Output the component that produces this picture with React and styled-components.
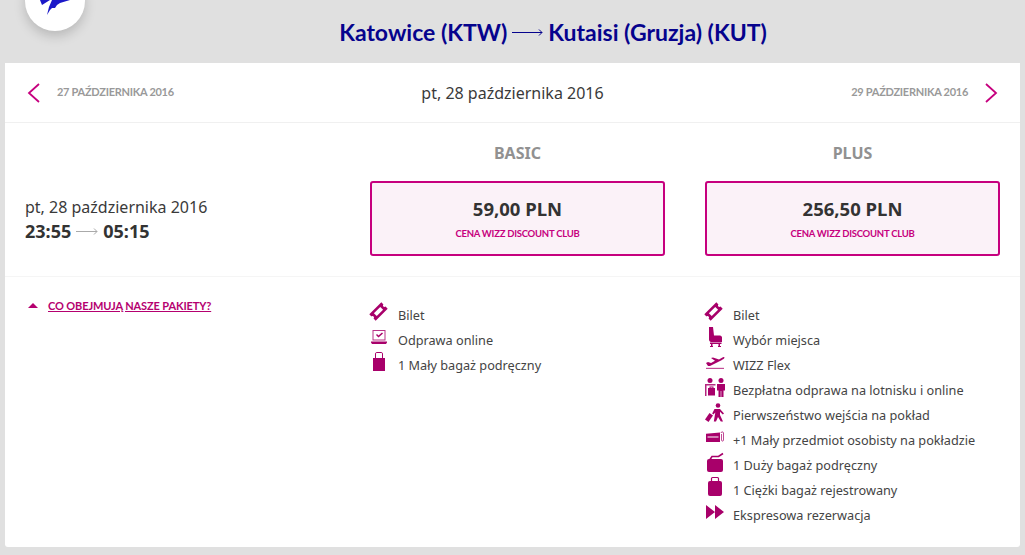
import React from 'react';
import styled, { createGlobalStyle } from 'styled-components';

const Global = createGlobalStyle`
  html, body { margin: 0; padding: 0; height: 555px; overflow: hidden; background: #e0e0e0; }
  body { font-family: "Noto Sans", "Liberation Sans", sans-serif; color: #333; }
`;

const Page = styled.div`
  height: 555px;
  padding: 0 5px;
  box-sizing: border-box;
  position: relative;
  overflow: hidden;
`;

const Header = styled.header`
  height: 63px;
  background: #e0e0e0;
  position: relative;
  display: flex;
  justify-content: center;
  padding: 17px 0 0 81px;
  box-sizing: border-box;
`;

const LogoBadge = styled.div`
  position: absolute;
  left: 20px;
  top: -29px;
  width: 60px;
  height: 60px;
  border-radius: 50%;
  background: #fff;
  box-shadow: 0 5px 12px rgba(0, 0, 0, 0.18);
  display: flex;
  align-items: flex-end;
  justify-content: center;
  svg { margin-bottom: 15px; }
`;

const Route = styled.h1`
  margin: 0;
  display: flex;
  align-items: center;
  gap: 5px;
  height: 30px;
  font: 700 23px/30px Lato, sans-serif;
  color: #06038d;
  white-space: nowrap;
`;

const Panel = styled.main`
  background: #fff;
  height: 484px;
  border-radius: 0 0 3px 3px;
`;

const DateNav = styled.nav`
  height: 59px;
  border-bottom: 1px solid #f0f0f0;
  display: grid;
  grid-template-columns: 1fr auto 1fr;
  align-items: center;
  padding: 0 22px;
`;

const NavSide = styled.div`
  display: flex;
  align-items: center;
  justify-content: ${(p) => (p.$end ? 'flex-end' : 'flex-start')};
  gap: 15px;
  font: 700 11px/16px Lato, sans-serif;
  letter-spacing: -0.27px;
  color: #999;
  span { position: relative; top: -1px; }
`;

const CurrentDate = styled.div`
  font-size: 16px;
  color: #3a3a3a;
`;

const Flight = styled.section`
  height: 153px;
  border-bottom: 1px solid #f5f5f5;
  display: grid;
  grid-template-columns: 325px 295px 295px;
  column-gap: 40px;
`;

const FlightInfo = styled.div`
  padding: 72px 0 0 20px;
  font-size: 16px;
  line-height: 24px;
  color: #3a3a3a;
`;

const Times = styled.div`
  display: flex;
  align-items: center;
  gap: 5px;
  font-size: 18px;
  font-weight: 700;
  color: #333;
`;

const Fare = styled.div`
  display: flex;
  flex-direction: column;
`;

const FareName = styled.div`
  height: 58px;
  padding-top: 18px;
  box-sizing: border-box;
  text-align: center;
  font-size: 16px;
  line-height: 24px;
  font-weight: 700;
  color: #919191;
`;

const PriceBox = styled.div`
  height: 75px;
  box-sizing: border-box;
  border: 2px solid #c6007e;
  border-radius: 3px;
  background: #fbf2f8;
  display: flex;
  flex-direction: column;
  align-items: center;
  padding-top: 14px;
`;

const Price = styled.div`
  font-size: 18.5px;
  line-height: 24px;
  font-weight: 700;
  color: #333;
`;

const Discount = styled.div`
  margin-top: 6px;
  font: 700 9.5px/14px Lato, sans-serif;
  letter-spacing: -0.25px;
  color: #c6007e;
`;

const Details = styled.section`
  display: grid;
  grid-template-columns: 325px 295px 295px;
  column-gap: 40px;
  padding-top: 20px;
`;

const Toggle = styled.a`
  display: flex;
  align-items: flex-start;
  gap: 10px;
  padding: 0 0 0 23px;
  font: 700 11px/17px Lato, sans-serif;
  letter-spacing: -0.12px;
  color: #b5006f;
  text-decoration: underline;
  &::before {
    content: '';
    margin-top: 6px;
    border-left: 5px solid transparent;
    border-right: 5px solid transparent;
    border-bottom: 5px solid #b5006f;
  }
`;

const Features = styled.ul`
  list-style: none;
  margin: 0;
  padding: 6px 0 0;
`;

const Feature = styled.li`
  height: 25px;
  box-sizing: border-box;
  padding-bottom: 2px;
  display: flex;
  align-items: center;
  gap: 8px;
  font-size: 12.7px;
  color: #444;
  white-space: nowrap;
`;

const IconSlot = styled.svg`
  width: 20px;
  height: 20px;
  flex: none;
  align-self: flex-start;
  overflow: visible;
  fill: #a8006a;
`;

const Arrow = ({ color, width }) => (
  <svg width={width} height="10" viewBox={`0 0 ${width} 10`} fill="none" stroke={color}>
    <path d={`M0 5.5H${width - 1}M${width - 4} 2.500l3 3-3 3`} strokeWidth="1" />
  </svg>
);

const Chevron = ({ right }) => (
  <svg width="15" height="22" viewBox="0 0 15 22" fill="none" stroke="#c6007e" strokeWidth="1.8">
    <path d={right ? 'M3 2l10 9-10 9' : 'M12 2L2 11l10 9'} />
  </svg>
);

const Icon = ({ children }) => <IconSlot viewBox="0 0 20 20">{children}</IconSlot>;

const icons = {
  ticket: (
    <path
      transform="rotate(-45 8.500 8.500)"
      fillRule="evenodd"
      d="M0 4H17V7c-1 0-1.500.700-1.500 1.500S16 10 17 10v3H0V10c1 0 1.500-.700 1.500-1.500S1 7 0 7zM4 6.500v4h9v-4z"
    />
  ),
  laptop: (
    <g>
      <path fillRule="evenodd" opacity=".8" d="M2.500 2h13v10.500h-13zM3.500 3v8.500h11V3z" />
      <path d="M1 13.500h16v1l-1 1.500H2l-1-1.500zM6 7l1-1 1.500 1.500L12 4.500l1 1L8.500 9.500z" />
    </g>
  ),
  bag: (
    <path
      fillRule="evenodd"
      d="M5 5V1c0-1 1-2 2-2h4c1 0 2 1 2 2v4h2v13H3V5zM6 5h6V.500c0-.300-.300-.500-.500-.500h-5c-.300 0-.500.200-.500.500z"
    />
  ),
  seat: (
    <g>
      <path d="M4 -1h4l1 8.500h6c1 0 2 1 2 2V14H6c-1 0-2-1-2-2.500z" />
      <path d="M5 14.500h11.500V16H15v2h1v1h-3v-1h.500v-2H7.500v2H8v1H5v-1h1v-2H5z" />
    </g>
  ),
  plane: (
    <g>
      <path d="M1 10l2-1 3 1 4-2.200L6 5l2-.500 6 2 3-1.800c1-.500 2.500-1 2.500 0 0 .600-1.500 1.700-3 2.500L5 13H3z" />
      <path opacity=".7" d="M1 14.800h18V16H1z" />
    </g>
  ),
  desk: (
    <g>
      <circle cx="5" cy="2.500" r="2.500" />
      <circle cx="16" cy="2.500" r="2.500" />
      <path d="M12 6h8v6.500h-1.500V19h-2.200v-6h-.600v6h-2.200v-6.500H12z" />
      <path fillRule="evenodd" opacity=".85" d="M0 6h10.500v1.500H1.500V18H0z" />
      <path d="M3 10h1.500V8.500h4V10H10v7.500H3zM5.500 9.500V10h2v-.500z" />
    </g>
  ),
  walk: (
    <g>
      <circle cx="13" cy="2.500" r="2.300" />
      <path d="M9.500 6h5.500l4 4.500-1.200 1-2.800-2.800V12l3 6.500h-2.200L13 14l-2 4.500H8.800l1.500-9-2 2-1.100-1z" />
      <path d="M4.500 10l3.500 2.500-4.500 6.500L0 16.500z" />
    </g>
  ),
  card: (
    <g>
      <path fillRule="evenodd" d="M1 5.800L15 4.500v9.500H1zM2.500 8.500v1h11v-1z" />
      <path fill="none" stroke="#a8006a" opacity=".7" strokeWidth="1" d="M16 5c0-1.500 2.500-1.500 2.500 0v7c0 1.500-2 1.500-2 0V6" />
    </g>
  ),
  bigBag: (
    <g>
      <rect x="2" y="6" width="16" height="13" rx="2" />
      <path fill="none" stroke="#a8006a" strokeWidth="1.600" d="M5 6.500L7 3.500h6.500L18 .500" />
    </g>
  ),
  heavyBag: (
    <g>
      <rect x="3" y="3" width="14" height="15" rx="2" />
      <path fill="none" stroke="#a8006a" strokeWidth="1.200" d="M6.500 3.500V.500c0-.500.500-1 1-1h5c.500 0 1 .500 1 1v3" />
    </g>
  ),
  fast: <path d="M1 2l9 7-9 7zM10 2l9 7-9 7z" />,
};

const basic = [
  ['ticket', 'Bilet'],
  ['laptop', 'Odprawa online'],
  ['bag', '1 Mały bagaż podręczny'],
];

const plus = [
  ['ticket', 'Bilet'],
  ['seat', 'Wybór miejsca'],
  ['plane', 'WIZZ Flex'],
  ['desk', 'Bezpłatna odprawa na lotnisku i online'],
  ['walk', 'Pierwszeństwo wejścia na pokład'],
  ['card', '+1 Mały przedmiot osobisty na pokładzie'],
  ['bigBag', '1 Duży bagaż podręczny'],
  ['heavyBag', '1 Ciężki bagaż rejestrowany'],
  ['fast', 'Ekspresowa rezerwacja'],
];

const FeatureList = ({ items }) => (
  <Features>
    {items.map(([icon, label]) => (
      <Feature key={label}>
        <Icon>{icons[icon]}</Icon>
        {label}
      </Feature>
    ))}
  </Features>
);

export default function App() {
  return (
    <Page>
      <Global />
      <Header>
        <LogoBadge>
          <svg width="32" height="16" viewBox="0 0 32 16" fill="#1b18c8">
            <path d="M1 0h10L3 5zM13 0h18l-10 3-3 2-2 3h-3l-2 2-3 5 2-8z" />
          </svg>
        </LogoBadge>
        <Route>
          Katowice (KTW) <Arrow color="#06038d" width={31} /> Kutaisi (Gruzja) (KUT)
        </Route>
      </Header>
      <Panel>
        <DateNav>
          <NavSide>
            <Chevron />
            <span>27 PAŹDZIERNIKA 2016</span>
          </NavSide>
          <CurrentDate>pt, 28 października 2016</CurrentDate>
          <NavSide $end>
            <span>29 PAŹDZIERNIKA 2016</span>
            <Chevron right />
          </NavSide>
        </DateNav>
        <Flight>
          <FlightInfo>
            pt, 28 października 2016
            <Times>
              23:55 <Arrow color="#aaa" width={22} /> 05:15
            </Times>
          </FlightInfo>
          <Fare>
            <FareName>BASIC</FareName>
            <PriceBox>
              <Price>59,00 PLN</Price>
              <Discount>CENA WIZZ DISCOUNT CLUB</Discount>
            </PriceBox>
          </Fare>
          <Fare>
            <FareName>PLUS</FareName>
            <PriceBox>
              <Price>256,50 PLN</Price>
              <Discount>CENA WIZZ DISCOUNT CLUB</Discount>
            </PriceBox>
          </Fare>
        </Flight>
        <Details>
          <div>
            <Toggle>CO OBEJMUJĄ NASZE PAKIETY?</Toggle>
          </div>
          <FeatureList items={basic} />
          <FeatureList items={plus} />
        </Details>
      </Panel>
    </Page>
  );
}
